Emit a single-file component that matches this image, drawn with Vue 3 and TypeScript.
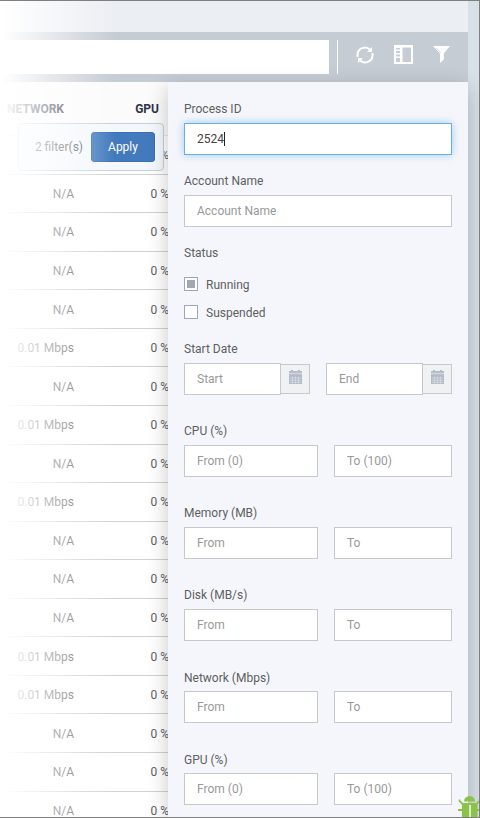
<script setup lang="ts">
import { ref } from 'vue'

interface Row { network: string; gpu: string }
interface Range { label: string; from: string; to: string }

const idle = 'N/A'
const busy = '0.01 Mbps'
const networks: string[] = [
  idle, idle, idle, idle, idle, busy, idle, busy, idle,
  busy, idle, idle, idle, busy, busy, idle, idle, idle,
]
const rows: Row[] = networks.map((network) => ({ network, gpu: '0 %' }))

const ranges: Range[] = [
  { label: 'CPU (%)', from: 'From (0)', to: 'To (100)' },
  { label: 'Memory (MB)', from: 'From', to: 'To' },
  { label: 'Disk (MB/s)', from: 'From', to: 'To' },
  { label: 'Network (Mbps)', from: 'From', to: 'To' },
  { label: 'GPU (%)', from: 'From (0)', to: 'To (100)' },
]
const dates: string[] = ['Start', 'End']
const statuses = ref([
  { label: 'Running', checked: true },
  { label: 'Suspended', checked: false },
])
const processId = ref('2524')
</script>

<template>
  <div class="screen">
    <header class="top"></header>
    <div class="toolbar">
      <div class="search"></div>
      <div class="divider"></div>
      <svg class="refresh" viewBox="0 0 18 18" width="18" height="18">
        <path d="M1.500 11V8.800A7.300 7.300 0 0 1 14 3.800M16.500 7v2.200A7.300 7.300 0 0 1 4 14.200" fill="none" stroke="#fff" stroke-width="2" />
        <path d="M16 1v5h-5zM2 17v-5h5z" fill="#fff" />
      </svg>
      <svg class="columns" viewBox="0 0 19 19" width="19" height="19">
        <path d="M0 0h19v19H0zM2 3v1.500h4V3zM2 6v2h4V6zM2 9.500v2h4v-2zM2 13v4h4v-4zM8.500 2.500V17H17V2.500z" fill="#fff" fill-rule="evenodd" />
      </svg>
      <svg class="funnel" viewBox="0 0 17 17" width="17" height="17">
        <path d="M0 0h17l-6.200 7.500v6L7 17V7.500z" fill="#fff" />
        <path d="M3.200 1.800l4.600 5" stroke="#c6ccd4" stroke-width=".8" fill="none" />
      </svg>
    </div>

    <main class="table">
      <div class="row head"><span class="net">NETWORK</span><span class="gpu">GPU</span></div>
      <div v-for="(row, i) in rows" :key="i" class="row">
        <span class="net">{{ i === 0 ? '' : row.network }}</span><span class="gpu">{{ row.gpu }}</span>
      </div>
    </main>

    <div class="popover">
      <span>2 filter(s)</span>
      <button class="apply">Apply</button>
    </div>

    <div class="rail"></div>

    <aside class="drawer">
      <div class="group">
        <label>Process ID</label>
        <div class="field focused"><span>{{ processId }}</span><i class="caret"></i></div>
      </div>
      <div class="group">
        <label>Account Name</label>
        <input class="field" placeholder="Account Name" />
      </div>
      <div class="group status">
        <label>Status</label>
        <div v-for="s in statuses" :key="s.label" class="check">
          <span class="box"><i v-if="s.checked"></i></span><span class="caption">{{ s.label }}</span>
        </div>
      </div>
      <div class="group wide">
        <label>Start Date</label>
        <div class="pair">
          <div v-for="d in dates" :key="d" class="date">
            <input class="field" :placeholder="d" />
            <span class="cal">
              <svg viewBox="0 0 13 14" width="13" height="14">
                <path d="M2 0h2v1h5V0h2v1h2v13H0V1h2z" fill="#b3bac8" />
                <path d="M0 3.500h13" stroke="#d3d7df" stroke-width="1.500" />
                <path d="M1 8h11M1 10.300h11M1 12.500h11M3.500 6.500v7M6.500 6.500v7M9.500 6.500v7" stroke="#e0e3e9" stroke-width=".6" />
              </svg>
            </span>
          </div>
        </div>
      </div>
      <div v-for="r in ranges" :key="r.label" class="group wide">
        <label>{{ r.label }}</label>
        <div class="pair">
          <input class="field from" :placeholder="r.from" />
          <input class="field to" :placeholder="r.to" />
        </div>
      </div>
    </aside>

    <div class="fade"></div>
    <svg class="bug" viewBox="0 0 22 22" width="22" height="22">
      <path d="M6 6.500a5.500 5.500 0 0 1 11 0zM4 8h15.500v14H4z" fill="#8bc34a" />
      <path d="M1.500 4.500v1.500l4 4M21.500 4.500v1.500l-4 4M-.5 15H5M18 15h4" stroke="#8bc34a" stroke-width="1.800" fill="none" />
      <path d="M12 10v12" stroke="#dcecc8" stroke-width="2" />
    </svg>
  </div>
</template>

<style>
body { margin: 0; background: #fff; }
</style>

<style scoped>
* { box-sizing: border-box; }
.screen {
  position: relative;
  width: 480px;
  height: 818px;
  overflow: hidden;
  border: solid #7f7f7f;
  border-width: 1px 1px 1px 0;
  background: #fff;
  color: #5e5f61;
  font: 12px/16px Roboto, sans-serif;
}
.top { height: 31px; background: #ebeef3; }
.toolbar {
  display: flex;
  height: 50px;
  padding: 8px 0;
  background: #c6ccd4;
}
.search { width: 329px; background: #fff; }
.divider { width: 1px; margin-left: 8px; background: #fff; }
.refresh { margin: 6px 0 0 18px; }
.columns { margin: 5px 0 0 20px; }
.funnel { margin: 6px 0 0 20px; }
.table { width: 168px; }
.row {
  display: flex;
  align-items: center;
  height: 38.57px;
  padding-top: 1px;
  border-bottom: 1px solid #d0d1d3;
}
.row.head {
  height: 54px;
  padding-top: 0;
  border-color: #e7e8ea;
  background: #fbfbfc;
  color: #2f3349;
  font-weight: 700;
}
.net { width: 74px; flex: none; text-align: right; white-space: nowrap; }
.head .net { width: 64px; }
.gpu { width: 95px; flex: none; text-align: right; white-space: nowrap; }
.popover {
  position: absolute;
  left: 18px;
  top: 122px;
  display: flex;
  align-items: center;
  justify-content: flex-end;
  gap: 8px;
  width: 146px;
  height: 48px;
  padding-right: 8px;
  border: 1px solid #c3d3dc;
  border-radius: 4px;
  background: #f4f8fc;
}
.apply {
  width: 64px;
  height: 30px;
  padding: 0;
  border: 1px solid #3b70b1;
  border-radius: 3px;
  background: #427abd;
  color: #fff;
  font: inherit;
}
.rail {
  position: absolute;
  right: 0;
  top: 0;
  width: 11px;
  height: 816px;
  background: #d8e0e8;
}
.drawer {
  position: absolute;
  left: 168px;
  top: 81px;
  display: flex;
  flex-direction: column;
  gap: 18px;
  width: 300px;
  height: 735px;
  padding: 19px 16px 0;
  background: #f5f6fb;
  box-shadow: 0 6px 20px rgba(0, 0, 0, 0.22);
}
.group { display: flex; flex-direction: column; }
.group > label { height: 16px; margin-bottom: 6px; }
.group:nth-last-child(-n + 2) > label { height: 17px; margin-bottom: 5px; padding-top: 1px; }
.group.status { margin-bottom: -3px; }
.group.status > label { margin-bottom: 9px; }
.group.wide + .wide { margin-top: 10px; }
.field {
  width: 100%;
  min-width: 0;
  height: 32px;
  padding: 0 12px 1px;
  border: 1px solid #c8c9cb;
  border-radius: 0;
  outline: none;
  background: #fff;
  color: #444;
  font: inherit;
}
.field::placeholder { color: #999; opacity: 1; }
.focused {
  display: flex;
  align-items: center;
  border-color: #66afe9;
  box-shadow: 0 0 8px rgba(102, 175, 233, 0.6);
}
.caret { width: 1px; height: 14px; background: #222; }
.check { display: flex; align-items: center; gap: 8px; height: 28px; }
.caption { padding-top: 2px; }
.box {
  display: flex;
  width: 14px;
  height: 14px;
  padding: 2px;
  border: 1px solid #a0a8b8;
  background: #fff;
}
.box i { flex: 1; background: #a0a8b5; }
.pair { display: flex; gap: 16px; }
.from { width: 134px; }
.to { width: 118px; }
.date { display: flex; align-items: center; width: 126px; }
.date .field { width: 97px; }
.cal {
  display: flex;
  justify-content: center;
  width: 29px;
  height: 30px;
  padding-top: 5px;
  border: 1px solid #c8c9cb;
  border-left: 0;
  background: #f0f1f3;
}
.fade {
  position: absolute;
  left: 0;
  top: -1px;
  width: 115px;
  height: 818px;
  background: linear-gradient(90deg, #fff 2px, rgba(255, 255, 255, 0));
}
.bug { position: absolute; left: 458px; top: 794px; }
</style>
